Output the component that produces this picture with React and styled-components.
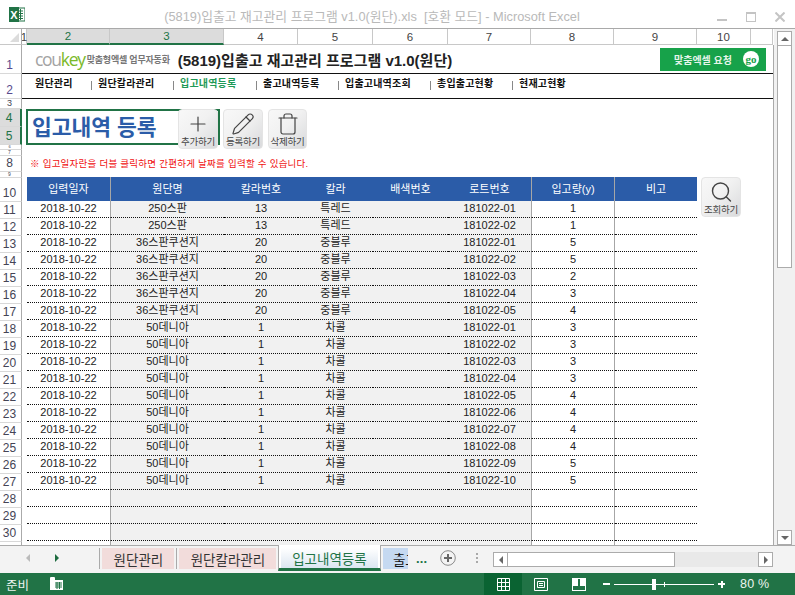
import { createGlobalStyle, styled } from "styled-components";
import { Plus, Pencil, Trash, Search } from "lucide-react";

const GlobalStyle = createGlobalStyle`
  html, body {
    margin: 0;
    padding: 0;
    background: white;
    font-family: "Liberation Sans", "Noto Sans CJK KR", sans-serif;
  }
  * {
    box-sizing: border-box;
  }
`;

const Window = styled.div`
  width: 795px;
  height: 595px;
  display: flex;
  flex-direction: column;
  overflow: hidden;
  background: white;
`;

const TitleBar = styled.div`
  height: 29px;
  flex: none;
  display: flex;
  align-items: center;
  padding: 0 10px 0 9px;
  border-bottom: 1px solid #a9a9a9;
  svg {
    display: block;
  }
`;
const TitleText = styled.div`
  flex: 1;
  text-align: center;
  padding-left: 2px;
  padding-top: 3px;
  color: #b9b9b9;
  font-size: 12.8px;
  white-space: pre;
`;
const WindowBtns = styled.div`
  display: flex;
  align-items: center;
  gap: 19px;
  padding-top: 6px;
`;

const Workspace = styled.div`
  flex: 1;
  display: flex;
  min-height: 0;
`;
const SheetColumn = styled.div`
  width: 774px;
  display: flex;
  flex-direction: column;
`;
const ColHeaders = styled.div`
  height: 16px;
  flex: none;
  display: flex;
`;
const Corner = styled.div`
  width: 22px;
  border-right: 1px solid #aaa;
  border-bottom: 1px solid #c8c8c8;
  position: relative;
  &::after {
    content: "";
    position: absolute;
    right: 2px;
    bottom: 2px;
    border-style: solid;
    border-width: 0 0 9px 9px;
    border-color: transparent transparent #dcdcdc transparent;
  }
`;
const ColHead = styled.div`
  width: ${(p) => p.$w}px;
  display: flex;
  align-items: center;
  justify-content: center;
  font-size: 11.5px;
  color: ${(p) => (p.$on ? "#217346" : "#444")};
  background: ${(p) => (p.$on ? "#dcdcdc" : "white")};
  border-right: 1px solid #c8c8c8;
  border-bottom: ${(p) => (p.$on ? "2px solid #217346" : "1px solid #c8c8c8")};
`;

const SheetBody = styled.div`
  flex: 1;
  display: flex;
  min-height: 0;
`;
const RowHeaders = styled.div`
  width: 22px;
  flex: none;
  display: flex;
  flex-direction: column;
  overflow: hidden;
`;
const RowHead = styled.div`
  height: ${(p) => p.$h}px;
  flex: none;
  display: flex;
  align-items: flex-end;
  justify-content: center;
  font-size: ${(p) => Math.min(12, p.$h - 1)}px;
  line-height: ${(p) => Math.min(15, p.$h - 1)}px;
  padding-right: 2px;
  color: ${(p) => (p.$on ? "#217346" : p.$tint ? "#574a8e" : "#445")};
  background: ${(p) => (p.$on ? "#dcdcdc" : "white")};
  border-bottom: 1px solid #d8d8d8;
  border-right: ${(p) => (p.$on ? "2px solid #217346" : "1px solid #aaa")};
`;

const Sheet = styled.div`
  flex: 1;
  padding-left: 5px;
  display: flex;
  flex-direction: column;
  border-right: 1px solid #aaa;
  overflow: hidden;
`;

const Banner = styled.div`
  height: 29px;
  flex: none;
  margin-left: -5px;
  padding: 0 7px 0 13px;
  display: flex;
  align-items: center;
  border-bottom: 1px solid #111;
`;
const Logo = styled.div`
  font-family: "Open Sans", sans-serif;
  font-size: 17.5px;
  letter-spacing: -1.3px;
  color: #a3a3a3;
  span {
    color: #7ab929;
  }
`;
const Slogan = styled.div`
  margin-left: 2px;
  font-size: 9px;
  font-weight: 700;
  letter-spacing: -0.2px;
  color: #777;
`;
const BannerTitle = styled.div`
  margin-left: 8px;
  font-size: 15px;
  font-weight: 700;
  color: #222;
`;
const RequestBtn = styled.div`
  margin-left: auto;
  width: 106px;
  height: 23px;
  padding: 0 7px 0 14px;
  display: flex;
  align-items: center;
  justify-content: space-between;
  background: #17a24a;
  color: #e6f5ea;
  font-size: 10px;
  font-weight: 700;
`;
const GoMark = styled.div`
  width: 16px;
  height: 16px;
  border-radius: 50%;
  background: white;
  color: #17a24a;
  display: flex;
  align-items: center;
  justify-content: center;
  font-family: "Liberation Serif", serif;
  font-size: 11px;
  font-weight: 700;
`;

const NavRow = styled.div`
  height: 25px;
  flex: none;
  margin-left: -5px;
  display: flex;
  align-items: flex-start;
  border-bottom: 1px solid #111;
  padding-left: 13px;
  padding-top: 1px;
`;
const NavItem = styled.div`
  width: ${(p) => p.$w}px;
  font-size: 10px;
  font-weight: 700;
  letter-spacing: 0.2px;
  color: ${(p) => (p.$on ? "#1f9a57" : "#111")};
  position: relative;
  &::before {
    content: ${(p) => (p.$first ? "none" : '""')};
    position: absolute;
    left: -7px;
    top: 6px;
    height: 9px;
    border-left: 1px solid #888;
  }
`;

const Toolbar = styled.div`
  margin-top: 10px;
  height: 40px;
  flex: none;
  display: flex;
  align-items: flex-start;
`;
const TitleBox = styled.div`
  width: 194px;
  height: 36px;
  margin-left: -1px;
  padding: 0 0 3px 4px;
  border: 2px solid #217346;
  display: flex;
  align-items: center;
  font-size: 21.5px;
  font-weight: 700;
  color: #2b5ca8;
`;
const ToolBtns = styled.div`
  display: flex;
  margin-left: -42px;
  gap: 5px;
`;
const ToolBtn = styled.div`
  width: ${(p) => p.$w || 40}px;
  height: 40px;
  flex: none;
  border: 1px solid #e4e4e4;
  border-radius: 4px;
  background: linear-gradient(135deg, #f8f8f8 0%, #f1f1f1 45%, #d9dadc 100%);
  display: flex;
  flex-direction: column;
  align-items: center;
  padding-top: 2px;
  font-size: 9.5px;
  line-height: 12px;
  letter-spacing: -0.3px;
  color: #444;
  white-space: nowrap;
  svg {
    display: block;
    color: #444;
  }
`;

const Hint = styled.div`
  height: 33px;
  flex: none;
  margin-top: -5px;
  padding: 14px 0 0 3px;
  font-size: 9.5px;
  line-height: 12px;
  letter-spacing: 0.25px;
  color: #f01010;
  white-space: nowrap;
`;

const TableArea = styled.div`
  display: flex;
  align-items: flex-start;
  gap: 4px;
`;
const Table = styled.div`
  width: 670px;
  flex: none;
`;
const Row = styled.div`
  display: grid;
  grid-template-columns: 84px 113px 74px 75px 75px 84px 83px 82px;
  height: ${(p) => p.$h}px;
  overflow: hidden;
`;
const HeadCell = styled.div`
  background: #2b5ca8;
  color: white;
  font-size: 11px;
  display: flex;
  align-items: center;
  justify-content: center;
  padding-bottom: 2px;
  border-right: ${(p) => (p.$rule ? "1px solid #a6a6a6" : "0")};
`;
const Cell = styled.div`
  background: ${(p) => (p.$shade ? "#f1f1f1" : "white")};
  border-right: ${(p) => (p.$rule ? "1px solid #a6a6a6" : "0")};
  border-bottom: 1px dotted #111;
  font-size: 11px;
  line-height: 13px;
  color: #222;
  text-align: center;
  padding-top: 1px;
  white-space: nowrap;
`;
const StubCell = styled(Cell)`
  border-bottom: 0;
`;

const VScroll = styled.div`
  flex: 1;
  padding: 2px 3px 0 3px;
  display: flex;
  flex-direction: column;
  background: #f1f1f1;
`;
const ScrollBtn = styled.div`
  height: 15px;
  flex: none;
  background: white;
  border: 1px solid #ababab;
  display: flex;
  align-items: center;
  justify-content: center;
`;
const Thumb = styled.div`
  height: 223px;
  flex: none;
  margin-top: -1px;
  background: white;
  border: 1px solid #ababab;
`;
const ScrollGap = styled.div`
  flex: 1;
`;

const Tri = styled.div`
  width: 0;
  height: 0;
  border-style: solid;
  border-color: transparent;
  ${(p) => p.$dir === "up" && `border-width: 0 4px 4px 4px; border-bottom-color: ${p.$c || "#666"};`}
  ${(p) => p.$dir === "down" && `border-width: 4px 4px 0 4px; border-top-color: ${p.$c || "#666"};`}
  ${(p) => p.$dir === "left" && `border-width: 4px 4px 4px 0; border-right-color: ${p.$c || "#666"};`}
  ${(p) => p.$dir === "right" && `border-width: 4px 0 4px 4px; border-left-color: ${p.$c || "#666"};`}
`;

const TabBar = styled.div`
  height: 28px;
  flex: none;
  display: flex;
  align-items: flex-start;
  background: #f3f3f3;
  border-top: 1px solid #aaa;
  padding-right: 22px;
`;
const TabNav = styled.div`
  width: 99px;
  height: 100%;
  flex: none;
  display: flex;
  gap: 25px;
  padding: 8px 0 0 26px;
`;
const TabSep = styled.div`
  width: 1px;
  height: 11px;
`;
const Tab = styled.div`
  width: ${(p) => p.$w}px;
  height: 21px;
  margin-top: 2px;
  margin-left: ${(p) => p.$ml || 0}px;
  flex: none;
  background: ${(p) => p.$bg};
  border-left: 1px solid transparent;
  color: #333;
  font-size: 13.5px;
  display: flex;
  align-items: center;
  justify-content: center;
  overflow: hidden;
  white-space: nowrap;
  box-shadow: -2px 0 0 #f3f3f3, -3px 0 0 #aaa;
`;
const ActiveTab = styled.div`
  width: 103px;
  height: 26px;
  margin-top: -1px;
  margin-left: 2px;
  flex: none;
  padding: 3px 2px 0 2px;
  background: white;
  border-left: 1px solid #aaa;
  border-right: 1px solid #aaa;
  border-bottom: 3px solid #217346;
`;
const ActiveInner = styled.div`
  height: 20px;
  background: linear-gradient(#ffffff, #dce6f1);
  color: #217346;
  font-size: 13.5px;
  display: flex;
  align-items: center;
  justify-content: center;
`;
const ClipTab = styled(Tab)`
  justify-content: flex-start;
  padding-left: 9px;
  box-shadow: none;
  color: #111;
`;
const More = styled.div`
  margin: 5px 0 0 8px;
  width: 23px;
  color: #217346;
  font-size: 13px;
  font-weight: 700;
  letter-spacing: 0.2px;
`;
const AddCircle = styled.div`
  width: 16px;
  height: 16px;
  margin: 4px 0 0 2px;
  flex: none;
  svg {
    display: block;
  }
`;
const Grip = styled.div`
  width: 2px;
  height: 11px;
  margin: 7px 0 0 20px;
  flex: none;
  background: repeating-linear-gradient(#a9a9a9 0 2px, transparent 2px 4px);
`;
const HScroll = styled.div`
  margin: 6px 0 0 15px;
  width: 280px;
  height: 15px;
  flex: none;
  display: flex;
  background: #e9e9e9;
`;
const HBtn = styled(ScrollBtn)`
  width: 15px;
  margin-left: ${(p) => (p.$end ? "auto" : "0")};
`;
const HThumb = styled.div`
  width: 168px;
  margin-left: -1px;
  background: white;
  border: 1px solid #ababab;
`;

const StatusBar = styled.div`
  height: 22px;
  flex: none;
  display: flex;
  align-items: center;
  background: #217346;
  color: #eef5f0;
  padding-left: 6px;
`;
const Ready = styled.div`
  font-size: 12.5px;
  width: 44px;
`;
const StatusIcon = styled.div`
  width: ${(p) => p.$w}px;
  height: 22px;
  flex: none;
  margin-left: ${(p) => p.$ml || 0}px;
  display: flex;
  align-items: center;
  justify-content: center;
  background: ${(p) => (p.$on ? "#0a6332" : "transparent")};
  svg {
    display: block;
  }
`;
const ZoomSign = styled.div`
  width: 7px;
  height: 2px;
  flex: none;
  background: white;
  margin-left: ${(p) => p.$ml}px;
  position: relative;
  &::after {
    content: ${(p) => (p.$plus ? '""' : "none")};
    position: absolute;
    left: 2.5px;
    top: -2.5px;
    width: 2px;
    height: 7px;
    background: white;
  }
`;
const ZoomTrack = styled.div`
  width: 100px;
  height: 1px;
  flex: none;
  margin-left: 4px;
  background: white;
  position: relative;
`;
const ZoomThumb = styled.div`
  position: absolute;
  left: 38px;
  top: -5px;
  width: 4px;
  height: 11px;
  background: white;
`;
const ZoomTick = styled.div`
  position: absolute;
  left: 50px;
  top: -2px;
  width: 1px;
  height: 5px;
  background: white;
`;
const ZoomLabel = styled.div`
  margin-left: 15px;
  font-size: 12.5px;
  letter-spacing: 0.2px;
`;

const columns = [
  [5, "1"],
  [83, "2", true],
  [114, "3", true],
  [74, "4"],
  [75, "5"],
  [75, "6"],
  [83, "7"],
  [83, "8"],
  [83, "9"],
  [54, "10"],
  [22, ""],
];

const rowHeights = [
  ["1", 29, false, true],
  ["2", 25, false, true],
  ["3", 10],
  ["4", 18, true],
  ["5", 18, true],
  ["6", 5],
  ["7", 6],
  ["8", 16],
  ["9", 6],
  ["10", 24],
];
for (let n = 11; n <= 30; n++) rowHeights.push([String(n), 17]);
rowHeights.push(["", 4]);

const navItems = [
  ["원단관리", 63],
  ["원단칼라관리", 82],
  ["입고내역등록", 83, true],
  ["출고내역등록", 82],
  ["입출고내역조회", 92],
  ["총입출고현황", 82],
  ["현재고현황", 70],
];

const heads = ["입력일자", "원단명", "칼라번호", "칼라", "배색번호", "로트번호", "입고량(y)", "비고"];

const makeRow = (name, code, color, lot, qty) => ["2018-10-22", name, code, color, "", `181022-${lot}`, qty, ""];
const rows = [
  makeRow("250스판", "13", "특레드", "01", "1"),
  makeRow("250스판", "13", "특레드", "02", "1"),
  makeRow("36스판쿠션지", "20", "중블루", "01", "5"),
  makeRow("36스판쿠션지", "20", "중블루", "02", "5"),
  makeRow("36스판쿠션지", "20", "중블루", "03", "2"),
  makeRow("36스판쿠션지", "20", "중블루", "04", "3"),
  makeRow("36스판쿠션지", "20", "중블루", "05", "4"),
  makeRow("50데니아", "1", "차콜", "01", "3"),
  makeRow("50데니아", "1", "차콜", "02", "3"),
  makeRow("50데니아", "1", "차콜", "03", "3"),
  makeRow("50데니아", "1", "차콜", "04", "3"),
  makeRow("50데니아", "1", "차콜", "05", "4"),
  makeRow("50데니아", "1", "차콜", "06", "4"),
  makeRow("50데니아", "1", "차콜", "07", "4"),
  makeRow("50데니아", "1", "차콜", "08", "4"),
  makeRow("50데니아", "1", "차콜", "09", "5"),
  makeRow("50데니아", "1", "차콜", "10", "5"),
  ["", "", "", "", "", "", "", ""],
  ["", "", "", "", "", "", "", ""],
  ["", "", "", "", "", "", "", ""],
];

const isShaded = (i) => i >= 1 && i <= 5;
const hasRule = (i) => i === 0 || i === 5 || i === 6;

const ExcelLogo = () => (
  <svg width="16" height="15" viewBox="0 0 16 15">
    <rect x="6" y="1" width="10" height="13" fill="#fff" stroke="#217346" />
    <path d="M9 4h5M9 6.5h5M9 9h5M9 11.5h5M11.5 2v11" stroke="#217346" strokeWidth="1" />
    <rect x="0" y="0" width="10" height="15" fill="#217346" />
    <text x="5" y="11.5" textAnchor="middle" fontSize="11" fontWeight="700" fill="#fff" fontFamily="Liberation Sans">
      X
    </text>
  </svg>
);

const App = () => {
  return (
    <>
      <GlobalStyle />
      <Window>
        <TitleBar>
          <ExcelLogo />
          <TitleText>{"(5819)입출고 재고관리 프로그램 v1.0(원단).xls  [호환 모드] - Microsoft Excel"}</TitleText>
          <WindowBtns>
            <svg width="10" height="10" viewBox="0 0 10 10">
              <rect x="0" y="7" width="10" height="2" fill="#c4c4c4" />
            </svg>
            <svg width="10" height="10" viewBox="0 0 10 10">
              <rect x="0.5" y="0.5" width="9" height="9" fill="none" stroke="#c4c4c4" />
              <rect x="0" y="0" width="10" height="2" fill="#c4c4c4" />
            </svg>
            <svg width="10" height="10" viewBox="0 0 10 10">
              <path d="M0.5 0.5L9.5 9.5M9.5 0.5L0.5 9.5" stroke="#c4c4c4" strokeWidth="2" />
            </svg>
          </WindowBtns>
        </TitleBar>
        <Workspace>
          <SheetColumn>
            <ColHeaders>
              <Corner />
              {columns.map(([w, label, on], i) => (
                <ColHead key={i} $w={w} $on={on}>
                  {label}
                </ColHead>
              ))}
            </ColHeaders>
            <SheetBody>
              <RowHeaders>
                {rowHeights.map(([label, h, on, tint], i) => (
                  <RowHead key={i} $h={h} $on={on} $tint={tint}>
                    {label}
                  </RowHead>
                ))}
              </RowHeaders>
              <Sheet>
                <Banner>
                  <Logo>
                    cou<span>key</span>
                  </Logo>
                  <Slogan>맞춤형엑셀 업무자동화</Slogan>
                  <BannerTitle>(5819)입출고 재고관리 프로그램 v1.0(원단)</BannerTitle>
                  <RequestBtn>
                    맞춤엑셀 요청
                    <GoMark>go</GoMark>
                  </RequestBtn>
                </Banner>
                <NavRow>
                  {navItems.map(([label, w, on], i) => (
                    <NavItem key={label} $w={w} $on={on} $first={i === 0}>
                      {label}
                    </NavItem>
                  ))}
                </NavRow>
                <Toolbar>
                  <TitleBox>입고내역 등록</TitleBox>
                  <ToolBtns>
                    <ToolBtn>
                      <Plus size={24} strokeWidth={1.2} />
                      추가하기
                    </ToolBtn>
                    <ToolBtn>
                      <Pencil size={24} strokeWidth={1.2} />
                      등록하기
                    </ToolBtn>
                    <ToolBtn $w={39}>
                      <Trash size={24} strokeWidth={1.2} />
                      삭제하기
                    </ToolBtn>
                  </ToolBtns>
                </Toolbar>
                <Hint>※ 입고일자란을 더블 클릭하면 간편하게 날짜를 입력할 수 있습니다.</Hint>
                <TableArea>
                  <Table>
                    <Row $h={24}>
                      {heads.map((h, i) => (
                        <HeadCell key={h} $rule={hasRule(i)}>
                          {h}
                        </HeadCell>
                      ))}
                    </Row>
                    {rows.map((row, r) => (
                      <Row key={r} $h={17}>
                        {row.map((v, i) => (
                          <Cell key={i} $shade={isShaded(i)} $rule={hasRule(i)}>
                            {v}
                          </Cell>
                        ))}
                      </Row>
                    ))}
                    <Row $h={4}>
                      {heads.map((h, i) => (
                        <StubCell key={h} $shade={isShaded(i)} $rule={hasRule(i)} />
                      ))}
                    </Row>
                  </Table>
                  <ToolBtn>
                    <Search size={25} strokeWidth={1.4} />
                    조회하기
                  </ToolBtn>
                </TableArea>
              </Sheet>
            </SheetBody>
          </SheetColumn>
          <VScroll>
            <ScrollBtn>
              <Tri $dir="up" />
            </ScrollBtn>
            <Thumb />
            <ScrollGap />
            <ScrollBtn>
              <Tri $dir="down" />
            </ScrollBtn>
          </VScroll>
        </Workspace>
        <TabBar>
          <TabNav>
            <Tri $dir="left" $c="#bbb" />
            <Tri $dir="right" $c="#1d6b3f" />
          </TabNav>
          <TabSep />
          <Tab $w={72} $ml={2} $bg="#f2dcdb">
            원단관리
          </Tab>
          <Tab $w={97} $ml={5} $bg="#f2dcdb">
            원단칼라관리
          </Tab>
          <ActiveTab>
            <ActiveInner>입고내역등록</ActiveInner>
          </ActiveTab>
          <ClipTab $w={25} $ml={2} $bg="#c5d9f1">
            출고
          </ClipTab>
          <More>...</More>
          <AddCircle>
            <svg width="16" height="16" viewBox="0 0 16 16">
              <circle cx="8" cy="8" r="7.3" fill="none" stroke="#8a8a8a" />
              <path d="M4 8h8M8 4v8" stroke="#666" strokeWidth="2" />
            </svg>
          </AddCircle>
          <Grip />
          <HScroll>
            <HBtn>
              <Tri $dir="left" />
            </HBtn>
            <HThumb />
            <HBtn $end>
              <Tri $dir="right" />
            </HBtn>
          </HScroll>
        </TabBar>
        <StatusBar>
          <Ready>준비</Ready>
          <StatusIcon $w={14}>
            <svg width="14" height="14" viewBox="0 0 14 14">
              <rect x="0" y="3" width="13" height="10" fill="#fff" />
              <rect x="0" y="0" width="5" height="4" rx="1" fill="#fff" />
              <path d="M5 6h7M5 8h7M5 10h7M7 5v7M9.500 5v7" stroke="#217346" strokeWidth="1" />
            </svg>
          </StatusIcon>
          <StatusIcon $w={38} $ml={420} $on>
            <svg width="13" height="13" viewBox="0 0 13 13" fill="none" stroke="#fff">
              <path d="M0.500 0.500h12v12h-12zM0.500 4.500h12M0.500 8.500h12M4.500 0.500v12M8.500 0.500v12" />
            </svg>
          </StatusIcon>
          <StatusIcon $w={14} $ml={12}>
            <svg width="14" height="13" viewBox="0 0 14 13" fill="none" stroke="#fff">
              <path d="M0.500 0.500h13v12h-13zM3.500 3.500h7v6h-7zM5 5.500h4M5 7.500h4" />
            </svg>
          </StatusIcon>
          <StatusIcon $w={14} $ml={24}>
            <svg width="14" height="13" viewBox="0 0 14 13">
              <rect x="0.500" y="0.500" width="13" height="12" fill="none" stroke="#fff" />
              <path d="M1 1h5v7H1zM8 1h5v7H8z" fill="#fff" />
            </svg>
          </StatusIcon>
          <ZoomSign $ml={17} />
          <ZoomTrack>
            <ZoomThumb />
            <ZoomTick />
          </ZoomTrack>
          <ZoomSign $ml={4} $plus />
          <ZoomLabel>80 %</ZoomLabel>
        </StatusBar>
      </Window>
    </>
  );
};

export default App;
